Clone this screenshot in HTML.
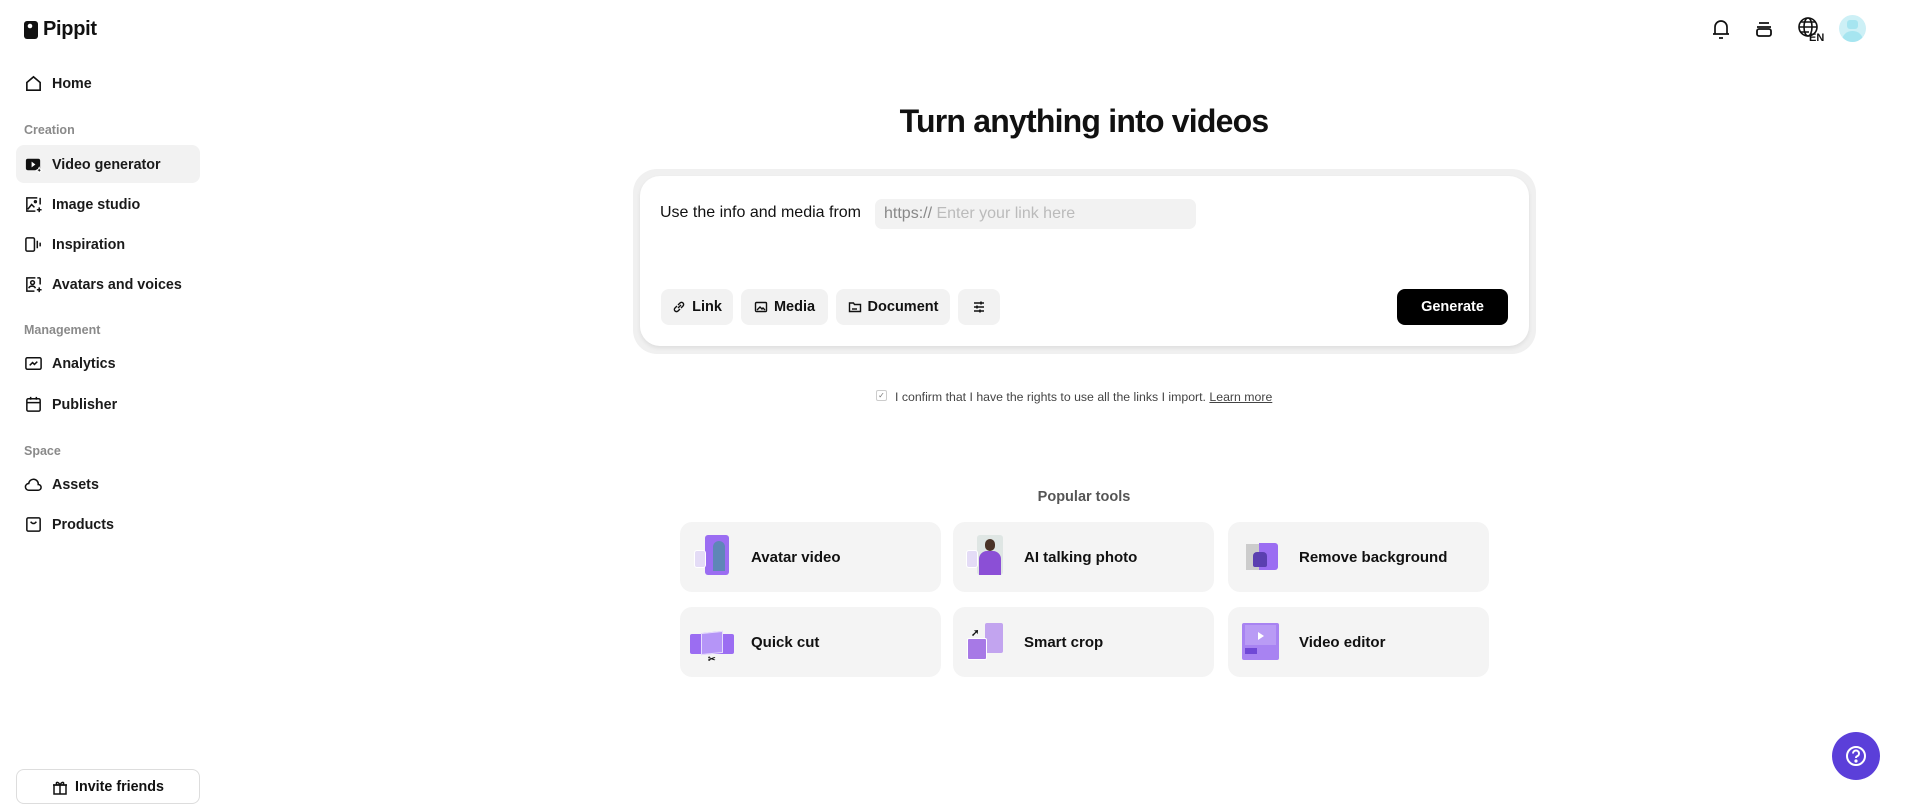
<!DOCTYPE html>
<html><head><meta charset="utf-8"><style>
*{box-sizing:border-box;margin:0;padding:0}
body{width:1911px;height:805px;overflow:hidden;background:#fff;font-family:"Liberation Sans",sans-serif;color:#111;position:relative}
.a{position:absolute}
.nav{position:absolute;left:24px;display:flex;align-items:center;font-size:14.3px;font-weight:700;color:#1a1a1a}
.nav svg{width:19px;height:19px;margin-right:9px}
.sec{position:absolute;left:24px;font-size:12.5px;color:#8a8a8a;font-weight:700}
.btn{position:absolute;top:289px;height:36px;background:#f2f2f2;border-radius:8px;display:flex;align-items:center;justify-content:center;font-size:14.5px;font-weight:700;gap:6px}
.tool{position:absolute;width:261px;height:70px;background:#f4f4f4;border-radius:12px;display:flex;align-items:center;font-size:15px;font-weight:700}
.tool .ic{width:44px;height:44px;margin-left:12px;margin-right:15px;position:relative}
</style></head><body>
<div class="a" style="left:24px;top:18px;display:flex;align-items:center">
<svg width="15" height="20" viewBox="0 0 15 20"><rect x="0" y="1" width="14" height="18" rx="3" fill="#111"/><circle cx="6" cy="6" r="2.3" fill="#fff"/></svg>
<span style="font-size:20px;font-weight:700;margin-left:4px;letter-spacing:-0.3px">Pippit</span></div>

<div class="nav" style="top:74px"><svg viewBox="0 0 20 20" fill="none" stroke="#111" stroke-width="1.7"><path d="M3 9 L10 3 L17 9 V17 H3 Z"/></svg>Home</div>
<div class="sec" style="top:123px">Creation</div>
<div class="a" style="left:16px;top:145px;width:184px;height:38px;background:#f2f2f2;border-radius:8px"></div>
<div class="nav" style="top:155px"><svg viewBox="0 0 20 20"><rect x="2" y="4" width="15" height="12" rx="2" fill="#111"/><path d="M8 7 L12 10 L8 13Z" fill="#fff"/><path d="M16 13 l1 2 2 1 -2 1 -1 2 -1-2 -2-1 2-1z" fill="#111" stroke="#fff"/></svg>Video generator</div>
<div class="nav" style="top:195px"><svg viewBox="0 0 20 20" fill="none" stroke="#111" stroke-width="1.6"><path d="M14 3H3V17H12"/><path d="M17 3V10"/><path d="M4 15 L8 10 L11 13"/><circle cx="12" cy="7" r="1"/><path d="M16 13v5M13.5 15.5h5"/></svg>Image studio</div>
<div class="nav" style="top:235px"><svg viewBox="0 0 20 20" fill="none" stroke="#111" stroke-width="1.6"><rect x="2" y="3" width="9" height="14" rx="1.5"/><path d="M14 6v8M17 8v4"/></svg>Inspiration</div>
<div class="nav" style="top:275px"><svg viewBox="0 0 20 20" fill="none" stroke="#111" stroke-width="1.6"><path d="M12 3H3V17H11M17 3V10M17 3h-3"/><circle cx="9" cy="8" r="2"/><path d="M5 14c1-3 6-3 7 0"/><path d="M16 13v5M13.5 15.5h5"/></svg>Avatars and voices</div>
<div class="sec" style="top:323px">Management</div>
<div class="nav" style="top:354px"><svg viewBox="0 0 20 20" fill="none" stroke="#111" stroke-width="1.6"><rect x="2" y="4" width="16" height="12" rx="1.5"/><path d="M6 12 L9 9 L11 11 L14 8"/></svg>Analytics</div>
<div class="nav" style="top:395px"><svg viewBox="0 0 20 20" fill="none" stroke="#111" stroke-width="1.6"><rect x="3" y="4" width="14" height="13" rx="1.5"/><path d="M3 8h14M7 2v3M13 2v3"/></svg>Publisher</div>
<div class="sec" style="top:444px">Space</div>
<div class="nav" style="top:475px"><svg viewBox="0 0 20 20" fill="none" stroke="#111" stroke-width="1.6"><path d="M5 16 H15 A3 3 0 0 0 15 10 A5 5 0 0 0 5 9 A3.5 3.5 0 0 0 5 16Z"/></svg>Assets</div>
<div class="nav" style="top:515px"><svg viewBox="0 0 20 20" fill="none" stroke="#111" stroke-width="1.6"><rect x="3" y="3" width="14" height="14" rx="1.5"/><path d="M7 7 Q10 11 13 7"/></svg>Products</div>

<div class="a" style="left:16px;top:769px;width:184px;height:35px;border:1px solid #ddd;border-radius:8px;display:flex;align-items:center;justify-content:center;font-size:14.3px;font-weight:700;gap:7px">
<svg width="16" height="16" viewBox="0 0 16 16" fill="none" stroke="#111" stroke-width="1.5"><rect x="2" y="6" width="12" height="9"/><path d="M1 6h14M8 6v9M8 6C6 2 3 3 5 6M8 6c2-4 5-3 3 0"/></svg>Invite friends</div>

<svg class="a" style="left:1711px;top:18px" width="20" height="22" viewBox="0 0 20 22" fill="none" stroke="#111" stroke-width="1.7"><path d="M4 16V9a6 6 0 0 1 12 0v7M2 16h16M8 20h4"/></svg>
<svg class="a" style="left:1755px;top:20px" width="18" height="18" viewBox="0 0 18 18" fill="none" stroke="#111" stroke-width="1.8"><path d="M4 3h10M2 7h14"/><rect x="2" y="9" width="14" height="7" rx="2"/></svg>
<svg class="a" style="left:1797px;top:16px" width="30" height="26" viewBox="0 0 30 26"><g fill="none" stroke="#111" stroke-width="1.6"><circle cx="11" cy="11" r="9"/><ellipse cx="11" cy="11" rx="4" ry="9"/><path d="M2 11h18M4 6h14M4 16h8"/></g><text x="12" y="25" font-size="11" font-weight="700" font-family="Liberation Sans" fill="#111">EN</text></svg>
<div class="a" style="left:1839px;top:15px;width:27px;height:27px;border-radius:50%;background:#cdf0f6;overflow:hidden"><div style="position:absolute;left:8px;top:5px;width:11px;height:9px;background:#a6e5f0;border-radius:3px"></div><div style="position:absolute;left:3px;top:16px;width:21px;height:14px;background:#a6e5f0;border-radius:10px 10px 0 0"></div></div>

<div class="a" style="left:0;width:2168px;top:103px;text-align:center;font-size:32px;font-weight:700;letter-spacing:-0.8px">Turn anything into videos</div>
<div class="a" style="left:633px;top:169px;width:903px;height:185px;background:#f0f0f0;border-radius:24px"></div>
<div class="a" style="left:640px;top:176px;width:889px;height:170px;background:#fff;border-radius:20px;box-shadow:0 2px 4px rgba(0,0,0,0.08)"></div>
<div class="a" style="left:660px;top:204px;font-size:16px">Use the info and media from</div>
<div class="a" style="left:875px;top:199px;width:321px;height:30px;background:#f2f2f2;border-radius:7px;font-size:16px;line-height:30px;padding-left:9px;color:#888">https:// <span style="color:#bbb">Enter your link here</span></div>
<div class="btn" style="left:661px;width:72px"><svg width="14" height="14" viewBox="0 0 14 14" fill="none" stroke="#111" stroke-width="1.4"><path d="M6 8 L9 5M5 6 L3 8a2 2 0 0 0 3 3l2-2M9 8l2-2a2 2 0 0 0-3-3L6 5"/></svg>Link</div>
<div class="btn" style="left:741px;width:87px"><svg width="14" height="14" viewBox="0 0 14 14" fill="none" stroke="#111" stroke-width="1.4"><rect x="1.5" y="2.5" width="11" height="9" rx="1"/><path d="M3 10l3-3 2 2 1-1 2 2"/></svg>Media</div>
<div class="btn" style="left:836px;width:114px"><svg width="14" height="14" viewBox="0 0 14 14" fill="none" stroke="#111" stroke-width="1.4"><path d="M1.5 3h4l1 1.5h6v7h-11z"/><path d="M4 9h5"/></svg>Document</div>
<div class="btn" style="left:958px;width:42px"><svg width="14" height="14" viewBox="0 0 14 14" fill="none" stroke="#111" stroke-width="1.4"><path d="M2 3h10M2 7h10M2 11h10"/><path d="M9 1.5v3M5 5.5v3M8 9.5v3" stroke-width="1.6"/></svg></div>
<div class="btn" style="left:1397px;width:111px;background:#000;color:#fff">Generate</div>

<div class="a" style="left:876px;top:390px;width:11px;height:11px;border:1px solid #ccc;border-radius:2px;font-size:8px;line-height:9px;text-align:center;color:#777">✓</div>
<div class="a" style="left:895px;top:390px;font-size:12.3px;color:#444">I confirm that I have the rights to use all the links I import. <u>Learn more</u></div>

<div class="a" style="left:0;width:2168px;top:489px;text-align:center;font-size:14.5px;color:#555;font-weight:700">Popular tools</div>

<div class="tool" style="left:680px;top:522px"><div class="ic"><div class="a" style="left:13px;top:0;width:24px;height:40px;background:#9b6df2;border-radius:3px"></div><div class="a" style="left:21px;top:6px;width:12px;height:30px;background:#5f86b8;border-radius:6px 6px 0 0"></div><div class="a" style="left:2px;top:15px;width:12px;height:18px;background:#e4dcf6;border:1px solid #fff;border-radius:3px"></div></div>Avatar video</div>
<div class="tool" style="left:953px;top:522px"><div class="ic"><div class="a" style="left:12px;top:0;width:26px;height:40px;background:#dfe6e4;border-radius:3px"></div><div class="a" style="left:14px;top:16px;width:22px;height:24px;background:#8b4fd6;border-radius:8px 8px 0 0"></div><div class="a" style="left:20px;top:4px;width:10px;height:12px;background:#4a3328;border-radius:5px"></div><div class="a" style="left:1px;top:15px;width:12px;height:18px;background:#e4dcf6;border:1px solid #fff;border-radius:3px"></div></div>AI talking photo</div>
<div class="tool" style="left:1228px;top:522px"><div class="ic"><div class="a" style="left:6px;top:9px;width:14px;height:26px;background:#ccc"></div><div class="a" style="left:19px;top:8px;width:19px;height:27px;background:#9b6df2;border-radius:0 3px 3px 0"></div><div class="a" style="left:13px;top:17px;width:14px;height:15px;background:#5b3fb0;border-radius:4px 4px 2px 2px"></div></div>Remove background</div>
<div class="tool" style="left:680px;top:607px"><div class="ic"><div class="a" style="left:-2px;top:14px;width:44px;height:20px;background:#9b6df2;border-radius:2px"></div><div class="a" style="left:9px;top:12px;width:22px;height:22px;background:#b595f7;border:1px solid #e6dcfd;transform:skewY(-6deg)"></div><div class="a" style="left:16px;top:34px;font-size:9px">✂</div></div>Quick cut</div>
<div class="tool" style="left:953px;top:607px"><div class="ic"><div class="a" style="left:20px;top:3px;width:18px;height:30px;background:#c2a4ef;border-radius:2px"></div><div class="a" style="left:2px;top:18px;width:20px;height:22px;background:#a779e6;border:1px solid #fff;border-radius:2px"></div><div class="a" style="left:6px;top:8px;font-size:10px">➚</div></div>Smart crop</div>
<div class="tool" style="left:1228px;top:607px"><div class="ic"><div class="a" style="left:2px;top:3px;width:37px;height:37px;background:#a883f2;border-radius:2px"></div><div class="a" style="left:5px;top:5px;width:31px;height:20px;background:#b99bf5"></div><div class="a" style="left:5px;top:28px;width:12px;height:6px;background:#7048d6"></div><div class="a" style="left:18px;top:12px;width:0;height:0;border-left:6px solid #fff;border-top:4px solid transparent;border-bottom:4px solid transparent"></div></div>Video editor</div>

<div class="a" style="left:1832px;top:732px;width:48px;height:48px;border-radius:50%;background:#5b3fd9;display:flex;align-items:center;justify-content:center"><svg width="22" height="22" viewBox="0 0 22 22" fill="none" stroke="#fff" stroke-width="2"><circle cx="11" cy="11" r="9"/><path d="M8 8.5a3 3 0 1 1 4 2.8c-.8.3-1 .8-1 1.7"/><circle cx="11" cy="16" r=".6" fill="#fff"/></svg></div>
</body></html>
